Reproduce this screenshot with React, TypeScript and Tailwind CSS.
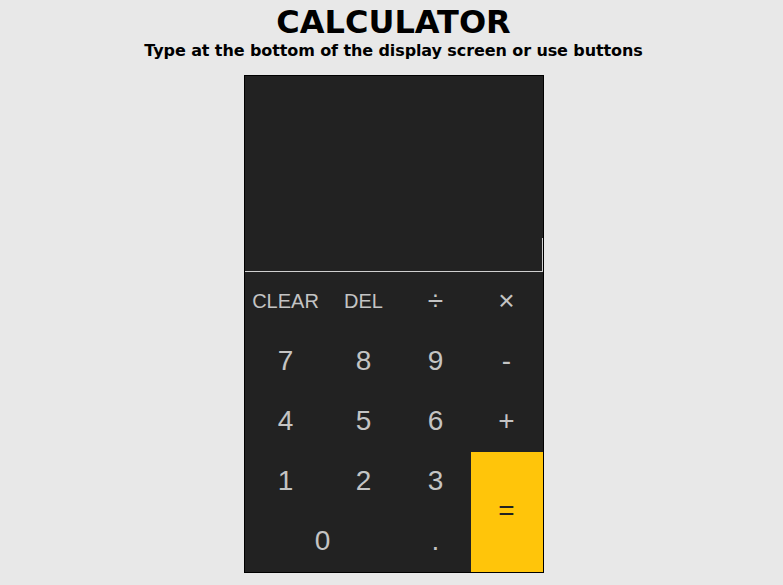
import { useState } from "react";

type Key = { label: string; cls: string };

const keys: Key[] = [
  { label: "CLEAR", cls: "text-[20px] text-[#c4c4c4]" },
  { label: "DEL", cls: "text-[20px] text-[#c4c4c4]" },
  { label: "÷", cls: "text-[28px] text-[#c4c4c4]" },
  { label: "×", cls: "text-[28px] text-[#c4c4c4]" },
  { label: "7", cls: "text-[28px] text-[#c4c4c4]" },
  { label: "8", cls: "text-[28px] text-[#c4c4c4]" },
  { label: "9", cls: "text-[28px] text-[#c4c4c4]" },
  { label: "-", cls: "text-[28px] text-[#c4c4c4]" },
  { label: "4", cls: "text-[28px] text-[#c4c4c4]" },
  { label: "5", cls: "text-[28px] text-[#c4c4c4]" },
  { label: "6", cls: "text-[28px] text-[#c4c4c4]" },
  { label: "+", cls: "text-[28px] text-[#c4c4c4]" },
  { label: "1", cls: "text-[28px] text-[#c4c4c4]" },
  { label: "2", cls: "text-[28px] text-[#c4c4c4]" },
  { label: "3", cls: "text-[28px] text-[#c4c4c4]" },
  { label: "=", cls: "text-[28px] row-span-2 bg-[#ffc50a] text-[#222222]" },
  { label: "0", cls: "text-[28px] col-span-2 text-[#c4c4c4]" },
  { label: ".", cls: "text-[28px] text-[#c4c4c4]" },
];

export default function App() {
  const [value, setValue] = useState("");

  const press = (k: string) => {
    if (k === "CLEAR") setValue("");
    else if (k === "DEL") setValue((v) => v.slice(0, -1));
    else if (k === "=") {
      try {
        const expr = value.replace(/×/g, "*").replace(/÷/g, "/");
        // eslint-disable-next-line no-new-func
        setValue(String(Function(`return (${expr})`)()));
      } catch {
        setValue("Error");
      }
    } else setValue((v) => v + k);
  };

  return (
    <div className="min-h-screen bg-[#e8e8e8] pt-[4px] pl-[4px] flex flex-col items-center font-['DejaVu_Sans',sans-serif] text-black">
      <h1 className="text-[32px] leading-[37px] font-bold">CALCULATOR</h1>
      <p className="text-[16px] leading-[19px] font-bold tracking-[-0.1px]">Type at the bottom of the display screen or use buttons</p>

      <div className="mt-[15px] w-[300px] border border-black bg-[#222222] flex flex-col">
        <div className="h-[196px] flex flex-col justify-end">
          <input
            value={value}
            onChange={(e) => setValue(e.target.value)}
            className="h-[34px] w-[298px] bg-transparent outline-none border-b border-r border-[#d0d0d0] text-right text-[24px] text-[#c4c4c4] px-2 font-['Liberation_Sans',sans-serif]"
          />
        </div>
        <div className="grid grid-cols-[82px_74px_70px_72px] auto-rows-[60px] font-['Liberation_Sans',sans-serif]">
          {keys.map((k) => (
            <button
              key={k.label}
              onClick={() => press(k.label)}
              className={`flex items-center justify-center pb-[2px] ${k.cls}`}
            >
              {k.label}
            </button>
          ))}
        </div>
      </div>
    </div>
  );
}
